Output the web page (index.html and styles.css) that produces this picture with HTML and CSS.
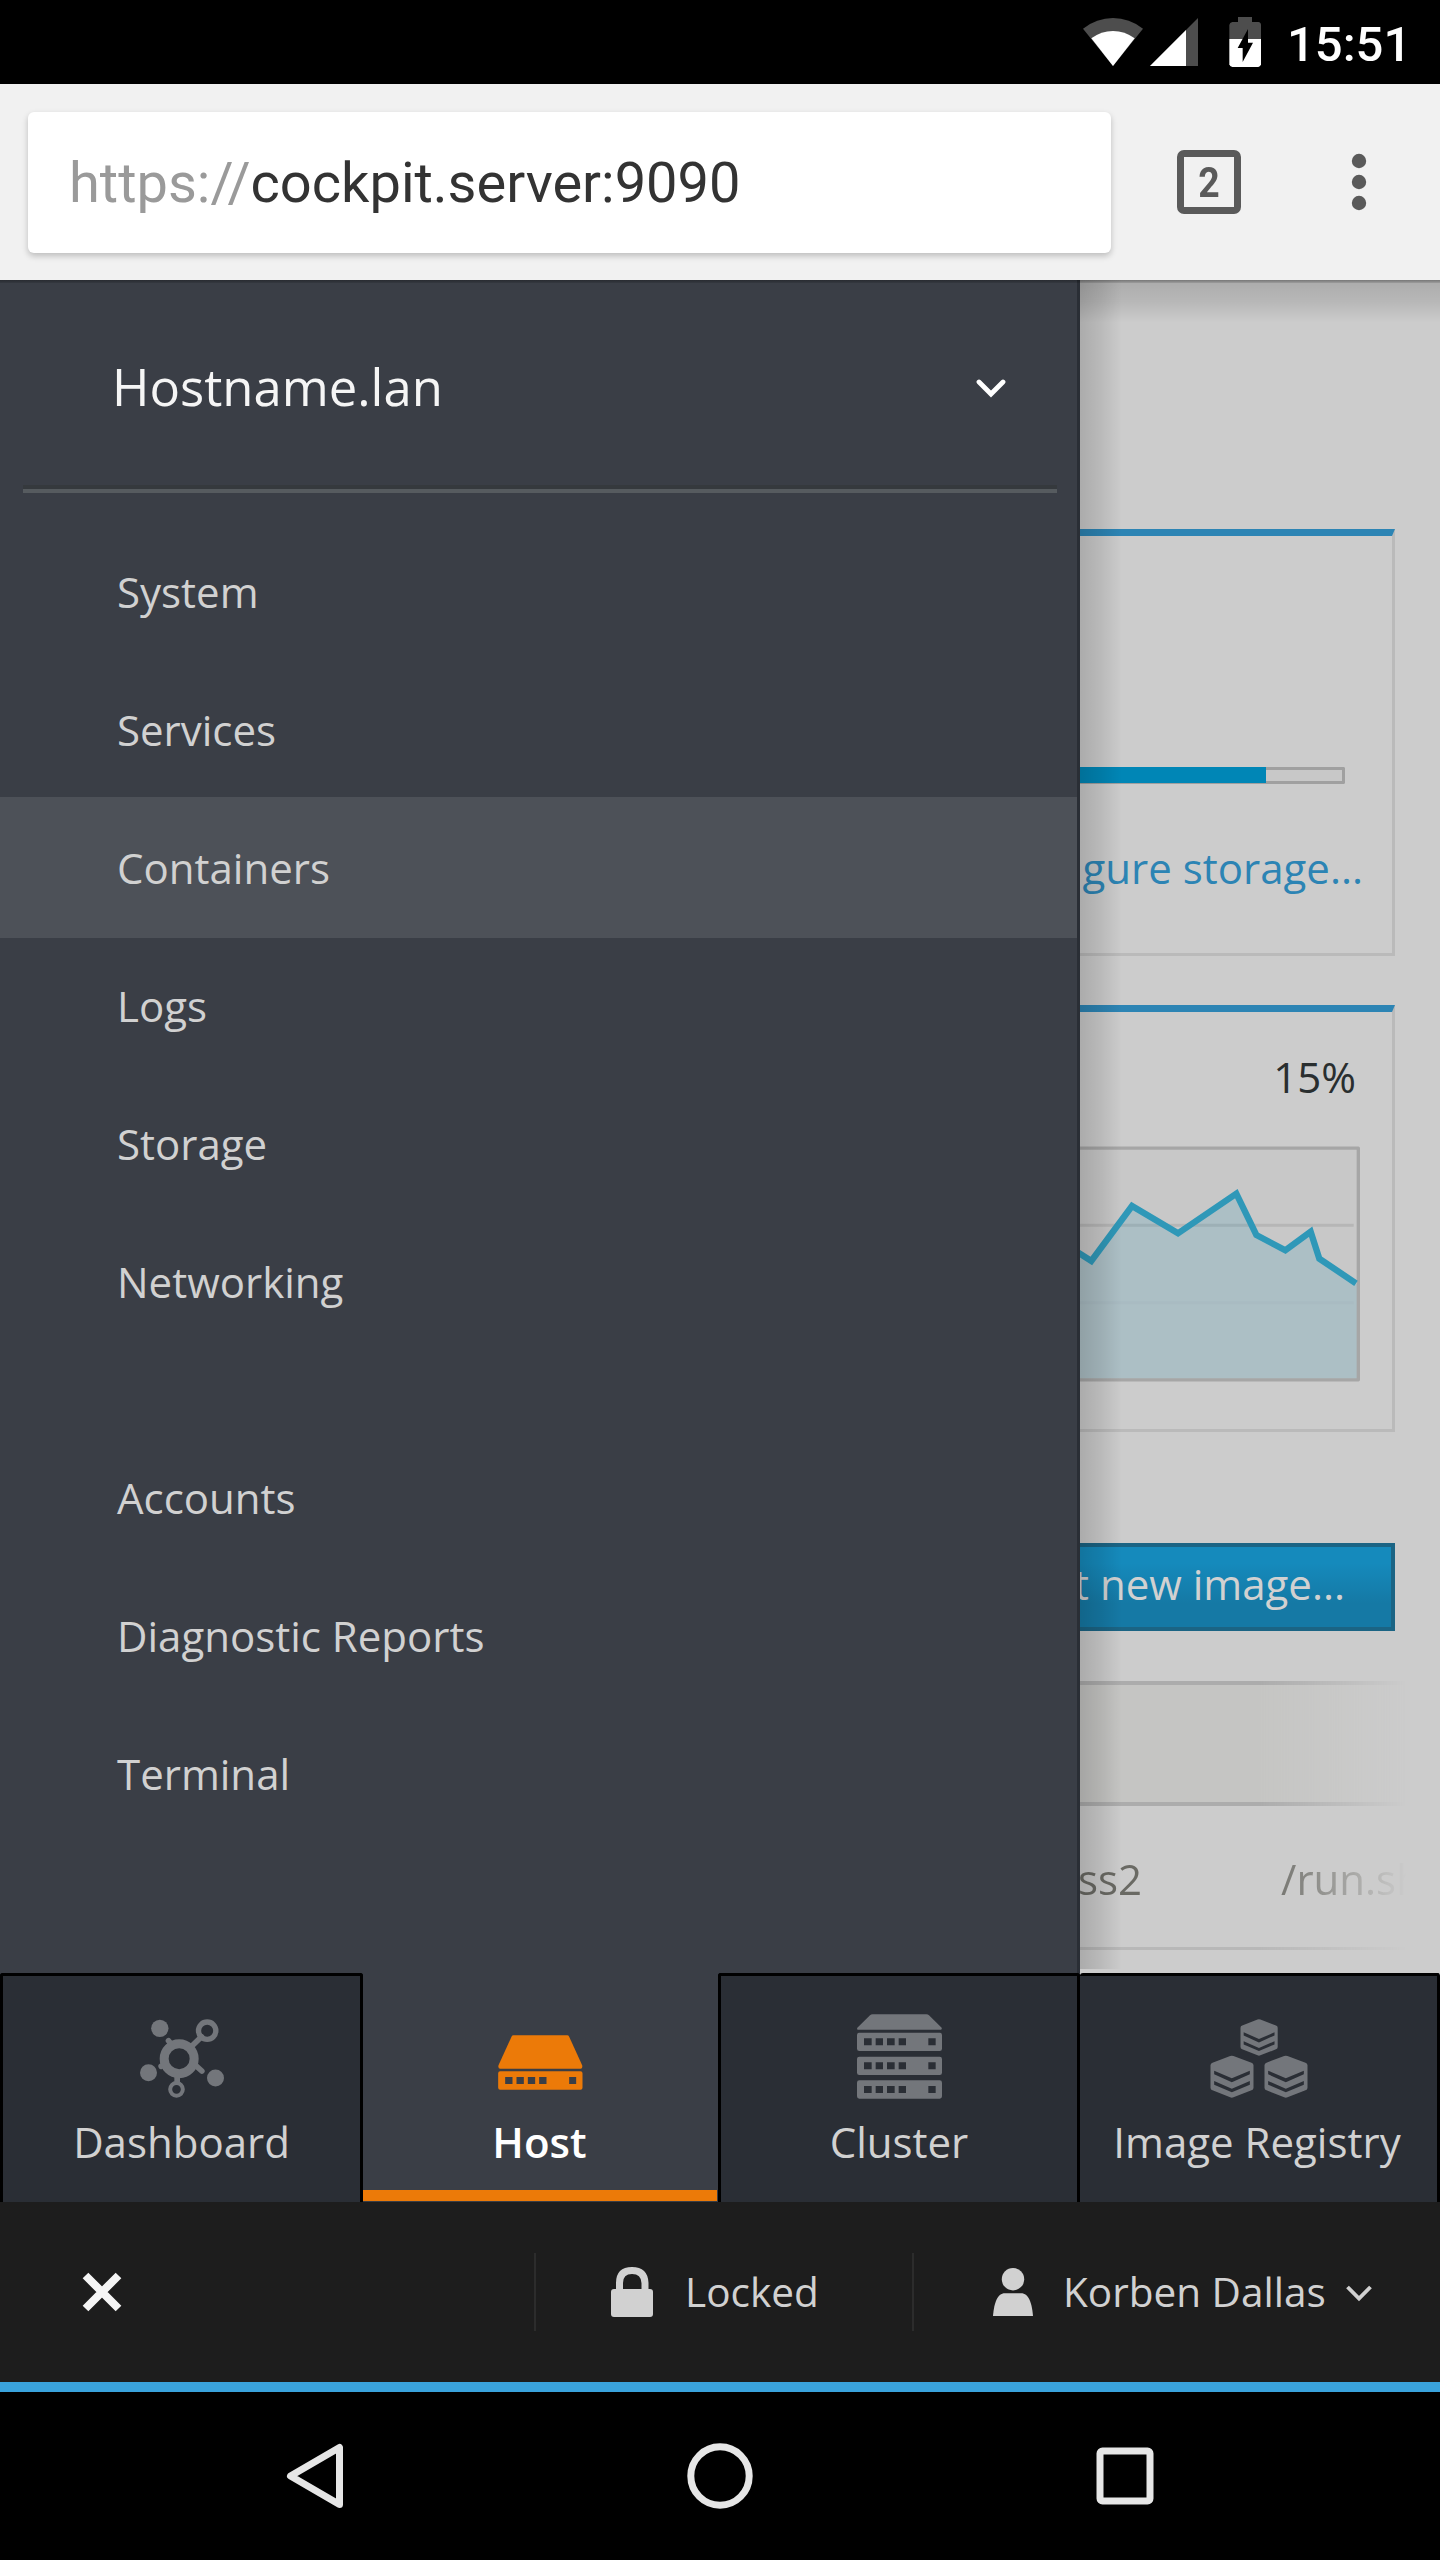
FILE: index.html
```html
<!DOCTYPE html>
<html lang="en">
<head>
<meta charset="utf-8">
<title>Cockpit</title>
<link rel="stylesheet" href="styles.css">
</head>
<body>
<div class="status-bar">
  <svg class="status-icons" width="240" height="84" viewBox="0 0 720 252">
    <path fill="#4d4d4d" d="M129 86Q170 54 219 54T309 86L219 198Z"/>
    <path fill="#fff" d="M154 115Q184 93 219 93T284 115L219 198Z"/>
    <path fill="#4d4d4d" d="M474 54V198H330Z"/>
    <path fill="#fff" d="M438 90V198H330Z"/>
    <path fill="#4d4d4d" d="M594 51H636V66H655Q663 67 663 75V118H568V75Q569 67 577 66H594Z"/>
    <path fill="#fff" d="M568 117H663V193Q662 200 655 201H577Q569 200 568 193Z"/>
    <path fill="#000" d="M624 87V128H639L608 186V144H593Z"/>
  </svg>
  <span class="clock">15:51</span>
</div>

<header class="browser-bar">
  <div class="url-box"><span class="url-scheme">https://</span><span>cockpit.server:9090</span></div>
  <div class="tab-count"><span>2</span></div>
  <svg class="overflow-menu" width="16" height="60" viewBox="0 0 16 60" fill="#5a5a5a">
    <circle cx="8" cy="9" r="7.2"/><circle cx="8" cy="30" r="7.2"/><circle cx="8" cy="51" r="7.2"/>
  </svg>
</header>

<main class="main">
  <nav class="drawer">
    <div class="host">
      <span>Hostname.lan</span>
      <svg width="30" height="20" viewBox="0 0 30 20"><path d="M3 4L15 16L27 4" fill="none" stroke="#fff" stroke-width="4.8" stroke-linecap="round"/></svg>
    </div>
    <ul class="menu">
      <li>System</li>
      <li>Services</li>
      <li class="selected">Containers</li>
      <li>Logs</li>
      <li>Storage</li>
      <li>Networking</li>
    </ul>
    <ul class="menu menu-tools">
      <li>Accounts</li>
      <li>Diagnostic Reports</li>
      <li>Terminal</li>
    </ul>
  </nav>

  <section class="content">
    <div class="card">
      <div class="progress"><div class="progress-fill"></div></div>
      <div class="link">Configure storage...</div>
    </div>
    <div class="card card-usage">
      <div class="percent">15%</div>
      <svg class="chart" width="280" height="236" viewBox="60 498 840 708">
        <rect x="30" y="504" width="865" height="696" fill="#c8c8c8"/>
        <path d="M60 736H881" stroke="#b6b6b6" stroke-width="9"/>
        <path d="M60 822L94 843L216 678L354 760L529 641L589 765L676 811L752 755L778 836L891 912V1196H60Z" fill="#2f98b8" fill-opacity=".18"/>
        <path d="M60 968H881" stroke="#a9bbc2" stroke-width="9"/>
        <rect x="30" y="504.500" width="865" height="695" fill="none" stroke="#a6a6a6" stroke-width="10" stroke-linejoin="round"/>
        <path d="M40 808L94 843L216 678L354 760L529 641L589 765L676 811L752 755L778 836L888 910" fill="none" stroke="#2f98b8" stroke-width="19"/>
      </svg>
    </div>
    <div class="button">Get new image...</div>
    <div class="table">
      <div class="table-head"></div>
      <div class="table-row"><span class="cell-name">wordpress2</span><span class="cell-command">/run.sh</span></div>
    </div>
  </section>
</main>

<nav class="tabs">
  <div class="tab tab-first">
    <svg width="100" height="94" viewBox="394.500 180 300 282" fill="#73767b">
      <g stroke="#73767b" stroke-linecap="round" fill="none">
        <path d="M504 272L516 287M482 349L496 341M586 347L604 363M530 380V396M575 287L603 260" stroke-width="17"/>
        <circle cx="536" cy="326" r="45" stroke-width="27"/>
        <circle cx="620" cy="242" r="26" stroke-width="16"/>
        <circle cx="528" cy="418" r="19" stroke-width="12"/>
      </g>
      <circle cx="478" cy="235" r="26"/><circle cx="444" cy="368" r="25.500"/><circle cx="645" cy="384" r="25.500"/>
    </svg>
    <span>Dashboard</span>
  </div>
  <div class="tab tab-active">
    <svg width="100" height="94" viewBox="451.500 180 300 282" fill="#ec7a08">
      <path d="M522 256H683Q687 256 689 260L728 346Q730 356 723 356H482Q475 356 477 346L516 260Q518 256 522 256Z"/>
      <path fill-rule="evenodd" d="M482 364H723Q729 364 729 370V413Q729 419 723 419H482Q476 419 476 413V370Q476 364 482 364ZM497 381V402H519V381ZM531 381V402H553V381ZM565 381V402H587V381ZM599 381V402H621V381ZM689 381V402H710V381Z"/>
    </svg>
    <span>Host</span>
  </div>
  <div class="tab">
    <svg width="100" height="94" viewBox="447 180 300 282" fill="#73767b">
      <defs><path id="unit" fill-rule="evenodd" d="M478 0H719Q726 0 726 7V48Q726 55 719 55H478Q471 55 471 48V7Q471 0 478 0ZM492 17V38H515V17ZM527 17V38H549V17ZM561 17V38H584V17ZM596 17V38H618V17ZM685 17V38H707V17Z"/></defs>
      <path d="M518 193H679Q684 193 687 196L725 233Q727 239 720 239H476Q469 239 472 233L510 196Q513 193 518 193Z"/>
      <use href="#unit" y="248"/><use href="#unit" y="320"/><use href="#unit" y="391"/>
    </svg>
    <span>Cluster</span>
  </div>
  <div class="tab tab-last">
    <svg width="100" height="94" viewBox="445.500 180 300 282">
      <defs><g id="stack">
        <path fill="#73767b" d="M64 0Q66 0 69 1L123 21Q129 23 129 29V96Q129 102 123 104L69 125Q64 127 59 125L6 104Q0 102 0 96V29Q0 23 6 21L59 1Q62 0 64 0Z"/>
        <path fill="#2a2e35" d="M11 45L64 68L118 45V56L64 80L11 56ZM11 76L64 99L118 76V87L64 110L11 87Z"/>
      </g></defs>
      <use href="#stack" transform="translate(540 208) scale(.865)"/>
      <use href="#stack" transform="translate(450 317)"/>
      <use href="#stack" transform="translate(612 317)"/>
    </svg>
    <span>Image Registry</span>
  </div>
</nav>

<footer class="footer">
  <div class="close">
    <svg width="42" height="42" viewBox="0 0 42 42"><path d="M4.500 4.500L37.500 37.500M37.500 4.500L4.500 37.500" stroke="#f5f5f5" stroke-width="8"/></svg>
  </div>
  <div class="privilege">
    <svg width="42" height="50" viewBox="0 0 42 50" fill="#d1d1d1">
      <path d="M3 22H39Q42 22 42 25V47Q42 50 39 50H3Q0 50 0 47V25Q0 22 3 22Z"/>
      <path d="M8.500 24V16Q8.500 3.500 21 3.500T34 16V24" fill="none" stroke="#d1d1d1" stroke-width="7"/>
    </svg>
    <span>Locked</span>
  </div>
  <div class="user">
    <svg width="40" height="48" viewBox="0 0 40 48" fill="#d1d1d1">
      <circle cx="20" cy="11.200" r="11.200"/>
      <path d="M12 25.300H28C36 25.300 39 36 40 48H0C1 36 4 25.300 12 25.300Z"/>
    </svg>
    <span>Korben Dallas</span>
    <svg class="user-caret" width="28" height="18" viewBox="0 0 28 18"><path d="M2.500 3L14 14.500L25.500 3" fill="none" stroke="#d1d1d1" stroke-width="3.800"/></svg>
  </div>
</footer>

<div class="system-nav">
  <svg width="60" height="68" viewBox="0 0 60 68"><path d="M54.500 5.500V62.500L5.500 34Z" fill="none" stroke="#e6e6e6" stroke-width="7" stroke-linejoin="round"/></svg>
  <svg width="68" height="68" viewBox="0 0 68 68"><circle cx="34" cy="34" r="29.200" fill="none" stroke="#e6e6e6" stroke-width="7"/></svg>
  <svg width="58" height="58" viewBox="0 0 58 58"><rect x="4" y="4" width="50" height="50" rx="2.500" fill="none" stroke="#e6e6e6" stroke-width="7"/></svg>
</div>
</body>
</html>
```
FILE: styles.css
```css
* { box-sizing: border-box; }

body {
  margin: 0;
  width: 1440px;
  height: 2560px;
  overflow: hidden;
  display: flex;
  flex-direction: column;
  background: #000;
  font: 42px/57px "Open Sans", sans-serif;
  white-space: nowrap;
}

svg { display: block; flex: none; }

.status-bar {
  height: 84px;
  padding-left: 1040px;
  display: flex;
  color: #fff;
}
.clock {
  margin-left: 7px;
  font: 500 49px/90px Roboto, sans-serif;
}

.browser-bar {
  height: 196px;
  padding: 28px 0 27px 28px;
  background: #f1f1f1;
  display: flex;
  align-items: center;
  color: #5a5a5a;
}
.url-box {
  width: 1083px;
  height: 141px;
  padding-left: 41px;
  border-radius: 6px;
  background: #fff;
  box-shadow: 0 3px 6px rgba(0, 0, 0, .22);
  color: #333;
  font: 56px/143px Roboto, sans-serif;
}
.url-scheme { color: #9a9a9a; }
.tab-count {
  width: 64px;
  height: 64px;
  margin: 0 0 1px 66px;
  border: 7px solid #5a5a5a;
  border-radius: 7px;
  text-align: center;
  font: 700 43px/50px Roboto, sans-serif;
}
.tab-count span { display: block; transform: scaleX(.87); }
.overflow-menu { margin: 0 0 1px 110px; }

.main {
  position: relative;
  height: 1693px;
  display: flex;
  background: #ccc;
}
.main::after {
  content: "";
  position: absolute;
  inset: 0 0 auto;
  height: 3px;
  background: linear-gradient(rgba(0, 0, 0, .3), rgba(0, 0, 0, .1));
}

.drawer {
  width: 1080px;
  border-right: 3px solid #2a2e35;
  background: #3a3e46;
  color: #d1d1d1;
}
.host {
  height: 213px;
  margin: 0 20px 30px 23px;
  padding: 7px 51px 0 89px;
  border-bottom: 4px solid #565b5f;
  box-shadow: inset 0 -4px #35393d;
  display: flex;
  align-items: center;
  justify-content: space-between;
  color: #f5f5f5;
  font-size: 50.8px;
}
.host span { margin-bottom: 3px; }
.menu { margin: 0; padding: 0; list-style: none; }
.menu li {
  height: 138px;
  padding-left: 117px;
  line-height: 138px;
}
.menu .selected { background: #4d5158; box-shadow: 0 -2px #4d5158, 0 1px #4d5158; }
.menu-tools { margin-top: 78px; }

.content {
  position: relative;
  width: 360px;
  padding: 249px 45px 0 0;
  overflow: hidden;
}
.content::before {
  content: "";
  position: absolute;
  z-index: 1;
  inset: 0 auto 4px 0;
  width: 42px;
  background: linear-gradient(to right, rgba(0, 0, 0, .16), rgba(0, 0, 0, .09) 50%, transparent);
}
.content::after {
  content: "";
  position: absolute;
  inset: 0 0 auto;
  height: 43px;
  background: linear-gradient(rgba(0, 0, 0, .16), rgba(0, 0, 0, .1) 50%, transparent);
}

.card {
  height: 427px;
  padding-top: 231px;
  border: solid #bababa;
  border-width: 7px 3px 3px 0;
  border-top-color: #2c84b4;
}
.progress {
  height: 17px;
  margin-right: 47px;
  border: 3px solid #a0a0a0;
  border-left: 0;
  border-radius: 0 2px 2px 0;
  background: #c8c8c8;
}
.progress-fill { width: 186px; height: 16px; margin-top: -3px; background: #0086b6; }
.link {
  margin-top: 55px;
  padding-right: 29px;
  display: flex;
  justify-content: flex-end;
  color: #2c84b4;
}
.card-usage { margin-top: 49px; padding-top: 36px; }
.percent { padding-right: 36px; text-align: right; color: #292e2f; }
.chart { margin-top: 41px; }

.button {
  height: 88px;
  margin-top: 111px;
  padding: 8px 46px 0 0;
  border: 4px solid #1b6484;
  border-left: 0;
  background: linear-gradient(#158abc 20%, #1579a5 70%);
  color: #d1d1d1;
  display: flex;
  justify-content: flex-end;
}

.table {
  width: 360px;
  margin-top: 50px;
  -webkit-mask-image: linear-gradient(to right, #000 180px, transparent 326px);
  mask-image: linear-gradient(to right, #000 180px, transparent 326px);
}
.table-head {
  height: 125px;
  border: solid #acacac;
  border-width: 4px 0;
  background: #c5c5c3;
}
.table-row {
  height: 144px;
  padding-top: 44px;
  border-bottom: 3px solid #b8b8b8;
  display: flex;
  color: #6a6a64;
}
.cell-name { width: 62px; display: flex; justify-content: flex-end; }
.cell-command { margin-left: 139px; }

.tabs {
  height: 229px;
  display: grid;
  grid-template-columns: 363px 355px 362px 360px;
  background: linear-gradient(to right, #3a3e46 1080px, #ccc 1080px);
  color: #d1d1d1;
}
.tab {
  padding-top: 34px;
  border: 3px solid #000;
  border-bottom: 0;
  border-radius: 3px 3px 0 0;
  background: #2a2e35;
  display: flex;
  flex-direction: column;
  align-items: center;
  gap: 9px;
}
.tab-active {
  padding: 37px 2px 0 0;
  border: 0;
  border-radius: 0;
  background: linear-gradient(#ec7a08, #ec7a08) 0 217px / 354px 11px no-repeat #3a3e46;
  color: #fff;
  font-weight: 600;
}
.tab-last { border-left: 0; }
.tab-last span { margin-right: 3px; }

.footer {
  height: 190px;
  padding-bottom: 1px;
  border-bottom: 10px solid #3aa3dc;
  background: #1d1d1d;
  color: #d1d1d1;
  display: flex;
  align-items: center;
  font-size: 40.5px;
}
.close { width: 534px; padding-left: 81px; }
.privilege, .user {
  height: 78px;
  border-left: 2px solid #2c2c2c;
  display: flex;
  align-items: center;
}
.privilege { width: 378px; padding-left: 75px; gap: 32px; }
.user { padding-left: 79px; gap: 30px; }
.user-caret { margin: 3px 0 0 -11px; }

.system-nav {
  height: 168px;
  padding-left: 285px;
  display: flex;
  align-items: center;
}
.system-nav svg:nth-child(2) { margin: 0 342px 0 341px; }
```
